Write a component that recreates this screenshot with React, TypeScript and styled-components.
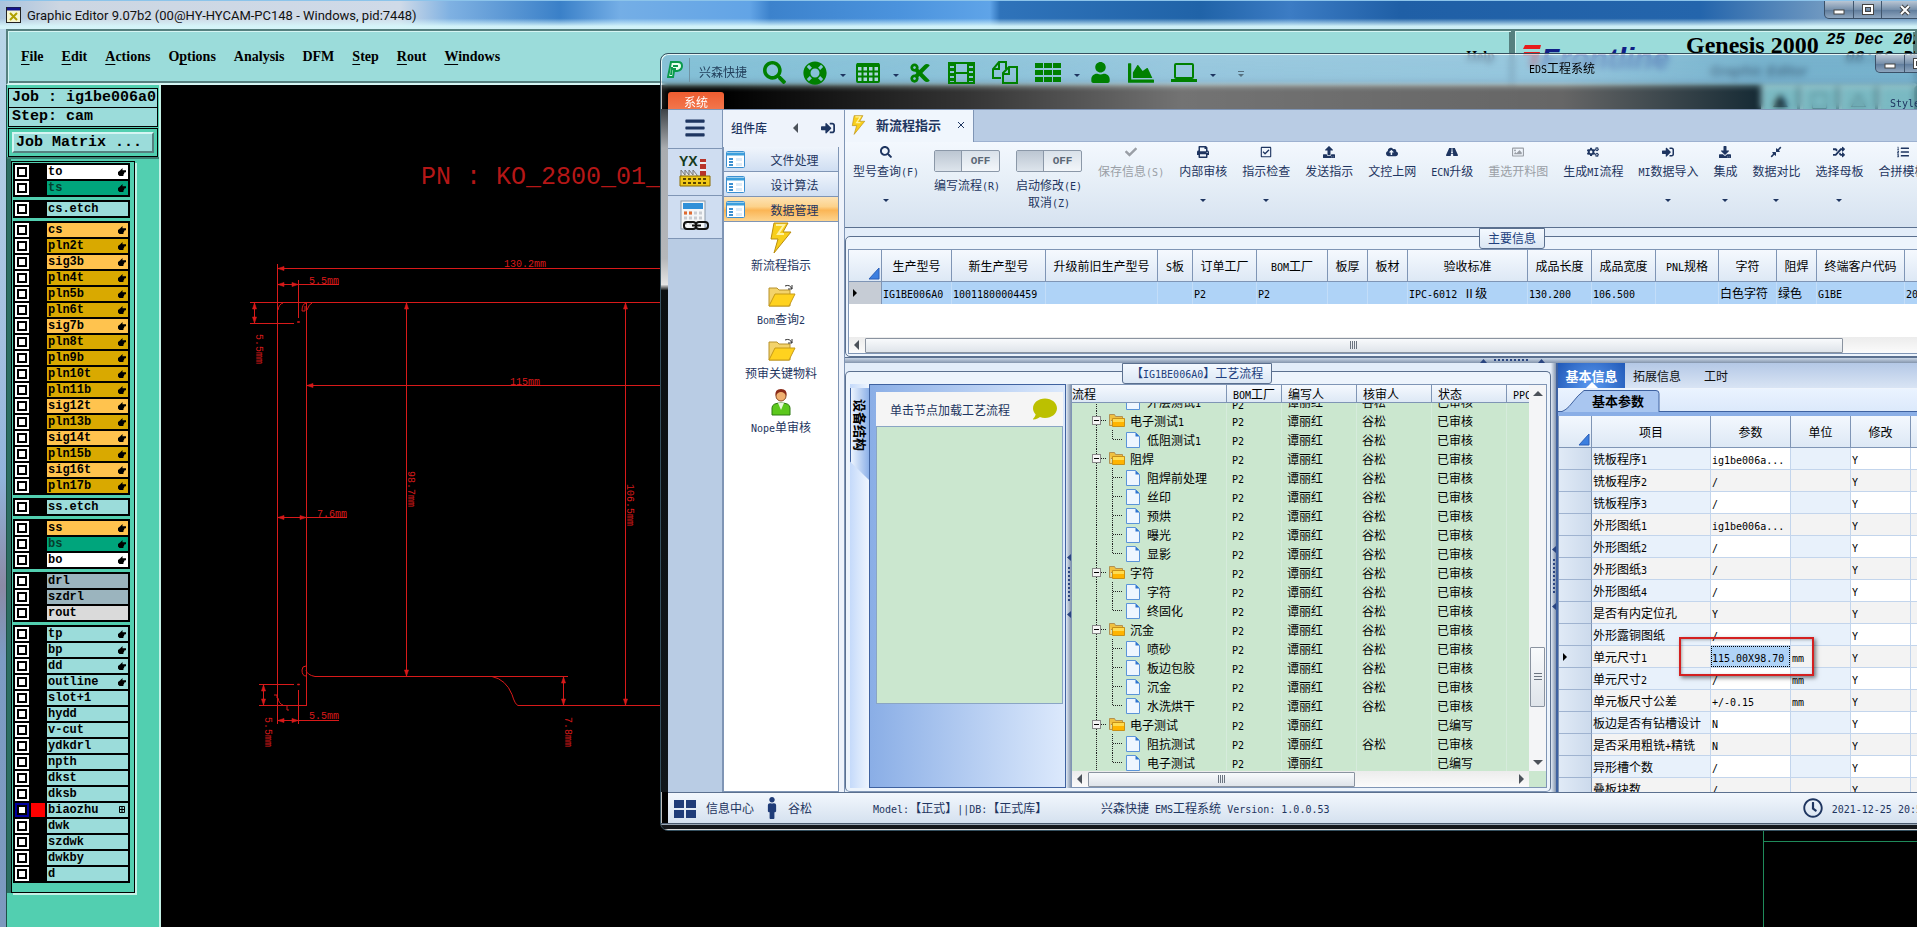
import React from 'react';
import styled, { createGlobalStyle, css } from 'styled-components';
import {
  FaSearch, FaLifeRing, FaCut, FaUser, FaChartArea, FaCheck, FaPrint, FaRegCheckSquare,
  FaUpload, FaCloudUploadAlt, FaRoad, FaRegImage, FaCogs, FaSignInAlt, FaDownload, FaCompressAlt,
  FaRandom, FaListOl, FaBars, FaMale, FaComment, FaRegClock,
} from 'react-icons/fa';

const CJK = '"Noto Sans CJK SC", sans-serif';
const LATIN = '"DejaVu Sans Mono", monospace';

const GlobalStyle = createGlobalStyle`
  * { box-sizing: border-box; }
  html, body, #root { margin: 0; height: 100%; }
  body { overflow: hidden; background: #000; font-family: ${CJK}; font-size: 12px; color: #000; }
  button { font: inherit; color: inherit; background: none; border: 0; padding: 0; margin: 0; white-space: nowrap; }
  table { border-collapse: separate; border-spacing: 0; table-layout: fixed; }
  th { font-weight: normal; }
  th, td { padding: 0; white-space: nowrap; overflow: hidden; }
  svg { display: block; flex: none; }
`;

/* Latin runs are set in a half-width face so that they line up with the ideographs. */
const Latin = styled.span`
  font-family: ${LATIN};
  font-size: 10px;
  line-height: 1;
`;
const Mix = ({ children }: { children: string }) => (
  <>
    {children.split(/([\x20-\x7e]+)/).map((part, i) =>
      i % 2 ? <Latin key={i}>{part.replace(/ /g, '\u00a0')}</Latin> : part)}
  </>
);

/* ---------- Genesis window ---------- */

const Desktop = styled.main`
  position: relative;
  height: 100%;
  min-height: 600px;
  overflow: hidden;
  display: flex;
  flex-direction: column;
`;
const GTitle = styled.header`
  height: 29px;
  flex: none;
  display: flex;
  align-items: center;
  padding-left: 6px;
  gap: 6px;
  border-top: 1px solid #8cc4ea;
  font: 13px Roboto, sans-serif;
  color: #111;
  background:
    linear-gradient(180deg, rgba(220, 245, 250, 0) 62%, rgba(214, 246, 250, 0.95) 90%),
    linear-gradient(90deg, #a9c3dd 0, #ccd6e2 60px, #cfdae8 400px, #7fb1e2 450px, #3a80c8 560px, #74aee6 620px,
      #62a4e6 750px, #3c82cc 770px, #4b93dd 900px, #5fa4e8 990px, #2f73ba 1000px, #2063a8 1200px, #3c7cc4 1290px,
      #1f5fa6 1400px, #2465ac 1700px, #6d97c0 1820px);
`;
const CaptionButtons = styled.div`
  margin: 0 -11px 0 auto;
  align-self: flex-start;
  display: flex;
  height: 18px;
  border: 1px solid #3a5068;
  border-top: 0;
  border-radius: 0 0 5px 5px;
  background: linear-gradient(#b9c6d4, #7790ab 50%, #5e7b9b 52%, #8ea6bf);
  button { width: 28px; display: flex; align-items: center; justify-content: center; border-left: 1px solid #40566e; }
  button:first-child { border-left: 0; }
  button:last-child { width: 46px; }
`;
const Caption = () => (
  <CaptionButtons>
    <button aria-label="minimize"><svg width="12" height="12"><rect x="1" y="6" width="10" height="4" fill="#fff" stroke="#444" /></svg></button>
    <button aria-label="maximize"><svg width="12" height="12"><rect x="2" y="2" width="8" height="7" fill="none" stroke="#444" strokeWidth="4" /><rect x="2" y="2" width="8" height="7" fill="none" stroke="#fff" strokeWidth="2" /></svg></button>
    <button aria-label="close"><svg width="12" height="12"><path d="M2 2l8 8M10 2l-8 8" stroke="#444" strokeWidth="4" /><path d="M2 2l8 8M10 2l-8 8" stroke="#fff" strokeWidth="2" /></svg></button>
  </CaptionButtons>
);
const GFrame = styled.div`
  flex: 1;
  min-height: 0;
  display: flex;
  flex-direction: column;
  padding-left: 6px;
  background: linear-gradient(180deg, #b9d6e8 0, #a4c0e0 35%, #92b4dc 50%, #8b8ba6 62%, #7d9cc4 70%, #7c99be 100%);
`;
const GTop = styled.div`
  display: flex;
  flex: none;
  height: 56px;
`;
const bevel = css`
  background: #9bdcda;
  border: 2px solid #56807f;
  border-bottom-color: #d5f5f3;
  box-shadow: inset 1px 1px 0 #d5f5f3, inset -2px -2px 0 #56807f;
`;
const MenuBar = styled.nav`
  ${bevel}
  width: 1507px;
  flex: none;
  display: flex;
  align-items: center;
  padding: 0 16px 0 13px;
  gap: 18px;
  font: bold 14px "Liberation Serif", serif;
`;
const MenuItem = styled.button<{ $end?: boolean }>`
  margin-left: ${p => (p.$end ? 'auto' : '0')};
  u { text-underline-offset: 3px; }
`;
const Brand = styled.div`
  ${bevel}
  flex: 1;
  min-width: 0;
  overflow: hidden;
  display: flex;
  padding: 0 0 0 6px;
`;
const Logo = styled.div`
  display: flex;
  width: 165px;
  flex: none;
  padding-top: 12px;
  font: italic bold 30px/32px "Liberation Sans", sans-serif;
  color: #101f86;
`;
const Stack = styled.div`
  width: 140px;
  flex: none;
  display: flex;
  flex-direction: column;
  white-space: nowrap;
`;
const Product = styled.div`
  font: bold 24px/28px "Liberation Serif", serif;
`;
const Sub = styled.div`
  padding-left: 24px;
  font: italic bold 14px/24px "Liberation Sans", sans-serif;
`;
const Stamp = styled.div`
  font: italic bold 16px/18px "Liberation Mono", monospace;
  white-space: nowrap;
`;
const Work = styled.div`
  flex: 1;
  min-height: 0;
  display: flex;
`;
const Side = styled.aside`
  width: 155px;
  flex: none;
  display: flex;
  flex-direction: column;
  background: #52cfb0;
  border-left: 1px solid #1f4f46;
  border-right: 2px solid #c4f1e6;
  padding-top: 3px;
`;
const Readouts = styled.div`
  padding: 0 1px;
  font: bold 15px/18px "Liberation Mono", monospace;
`;
const Readout = styled.div`
  height: 20px;
  padding: 0 3px;
  border: 1px solid #000;
  background: #9bdcda;
  white-space: nowrap;
  & + & { margin-top: -1px; }
`;
const MatrixWrap = styled.div`
  margin-top: 1px;
  padding: 3px;
  border: 1px solid #000;
`;
const MatrixButton = styled.button`
  display: block;
  width: 100%;
  height: 21px;
  padding-left: 2px;
  text-align: left;
  background: #9bdcda;
  border: 2px solid #d5f5f3;
  border-right-color: #56807f;
  border-bottom-color: #56807f;
`;
const LayerWell = styled.div`
  padding: 2px 0 0 4px;
  border-top: 2px solid #3c7f72;
  background: linear-gradient(90deg, #2d6e62 4px, transparent 4px);
`;
const LayerList = styled.div`
  width: 124px;
  padding: 1px 4px 9px 1px;
  border: 1px solid #000;
  box-shadow: 2px 2px 0 #c4f1e6;
  display: flex;
  flex-direction: column;
  gap: 3px;
`;
const LayerGroup = styled.div`
  display: flex;
  flex-direction: column;
  gap: 2px;
  padding: 2px;
  background: #000;
`;
const LayerRow = styled.label`
  display: flex;
  height: 14px;
  gap: 2px;
  font: bold 12px/14px "Liberation Mono", monospace;
`;
const LayerCheck = styled.input<{ $on?: boolean }>`
  appearance: none;
  width: 14px;
  height: 14px;
  margin: 0;
  border: 2px solid ${p => (p.$on ? '#0000a0' : '#fff')};
  background: #fff;
  box-shadow: inset 0 0 0 2px #000;
`;
const Swatch = styled.span<{ $c?: string }>`
  width: 14px;
  background: ${p => p.$c || '#000'};
`;
const LayerName = styled.span<{ $c: string; $dim?: boolean }>`
  flex: 1;
  display: flex;
  align-items: center;
  justify-content: space-between;
  padding: 0 2px 0 1px;
  background: ${p => p.$c};
  color: ${p => (p.$dim ? '#063d2c' : '#000')};
`;
const Hand = () => (
  <svg width="8" height="8" viewBox="0 0 8 8"><path d="M0 4L2 2.500 4.500 0v2.300H8v1.900H6.500v1H6v1H5.400V8H1.500L0 6.500z" fill="#000" /></svg>
);
const Grid4 = () => (
  <svg width="7" height="8" viewBox="0 0 7 8"><path d="M.5.5h5v6h-5zM3 .5v6M.5 3.5h5" fill="none" stroke="#000" /></svg>
);

const Y = '#ffc34e', D = '#d9a900', A = '#9bdcda', W = '#fff', G = '#00a57c', S = '#9bb4be';
type Layer = [string, string, number];
const LAYERS: Layer[][] = [
  [['to', W, 1], ['ts', G, 1]],
  [['cs.etch', A, 0]],
  [['cs', Y, 1], ['pln2t', D, 1], ['sig3b', Y, 1], ['pln4t', D, 1], ['pln5b', D, 1], ['pln6t', D, 1], ['sig7b', Y, 1],
    ['pln8t', D, 1], ['pln9b', D, 1], ['pln10t', D, 1], ['pln11b', D, 1], ['sig12t', Y, 1], ['pln13b', D, 1],
    ['sig14t', Y, 1], ['pln15b', D, 1], ['sig16t', Y, 1], ['pln17b', D, 1]],
  [['ss.etch', A, 0]],
  [['ss', Y, 1], ['bs', G, 1], ['bo', W, 1]],
  [['drl', S, 0], ['szdrl', S, 0], ['rout', '#dadada', 0]],
  [['tp', A, 1], ['bp', A, 1], ['dd', A, 1], ['outline', A, 1], ['slot+1', A, 0], ['hydd', A, 0], ['v-cut', A, 0],
    ['ydkdrl', A, 0], ['npth', A, 0], ['dkst', A, 0], ['dksb', A, 0], ['biaozhu', A, 2], ['dwk', A, 0],
    ['szdwk', A, 0], ['dwkby', A, 0], ['d', A, 0]],
];

const Canvas = styled.div`
  position: relative;
  flex: 1;
  min-width: 0;
  background: #000;
  overflow: hidden;
`;
const ViewTools = styled.div`
  position: absolute;
  top: 0;
  right: 0;
  display: flex;
  button {
    width: 39px; height: 30px; background: #9bdcda; border: 3px solid #c5ebe9;
    border-right-color: #56807f; border-bottom-color: #56807f; font-size: 16px;
  }
`;
const h = (x1: number, x2: number, y: number) => `M${x1} ${y}H${x2}`;
const v = (x: number, y1: number, y2: number) => `M${x} ${y1}V${y2}`;
const aL = (x: number, y: number) => `M${x} ${y}l6 -2v4z`;
const aR = (x: number, y: number) => `M${x} ${y}l-6 -2v4z`;
const aU = (x: number, y: number) => `M${x} ${y}l-2 6h4z`;
const aD = (x: number, y: number) => `M${x} ${y}l-2 -6h4z`;
const DIMS: [string, number, number, boolean][] = [
  ['130.2mm', 504, 267, false], ['5.5mm', 309, 284, false], ['115mm', 510, 385, false], ['7.6mm', 317, 517, false],
  ['5.5mm', 309, 719, false], ['5.5mm', 256, 334, true], ['98.7mm', 408, 471, true], ['106.5mm', 627, 484, true],
  ['5.5mm', 265, 717, true], ['7.8mm', 565, 717, true],
];
const Drawing = () => (
  <svg width="100%" height="100%">
    <g transform="translate(-161 -85)" stroke="#d81a1a" fill="none" strokeWidth="1" fontFamily='"Liberation Mono", monospace'>
      <path d={[
        h(277, 700, 268.5), h(277, 339, 284.5), h(250, 700, 302.5), h(250, 294, 323.5), h(307, 700, 385.5),
        h(277, 347, 517.5), h(315, 568, 676.5), h(259, 294, 684.5), h(259, 307, 705.5), h(518, 700, 705.5),
        h(277, 339, 720.5), v(277.5, 264, 724), v(298.5, 280, 318), v(254.5, 303, 323), v(306.5, 302, 705),
        v(406.5, 303, 676), v(625.5, 303, 705), v(563.5, 676, 705), v(263.5, 684, 705), v(298.5, 690, 724),
      ].join('')} />
      <path d="M278 310q1-6 5-7M307 310q2-6 5-7M306 303q-4 1-4 8h3v-5M306 666q-4 0-4 4q0 6 4 6M306 670q1 5 9 6.500M492 676.500q14 3 20 18q3 10 6 11M278 698q1 6 5 7M274 695h3v3M287 706v4h2" />
      <path fill="#d81a1a" d={[
        aL(278, 268.5), aL(278, 284.5), aR(298, 284.5), aL(307, 385.5), aL(278, 517.5), aR(306, 517.5), aL(278, 720.5),
        aR(298, 720.5), aU(254.5, 303), aD(254.5, 323), aU(406.5, 303), aD(406.5, 676), aU(625.5, 303), aD(625.5, 705),
        aU(563.5, 677), aD(563.5, 705), aU(263.5, 685), aD(263.5, 705), 'M297.500 321.500h2v1h-2zM297.500 684h2v1h-2z',
      ].join('')} strokeWidth=".6" />
      <g stroke="none" fill="#d81a1a" fontSize="10">
        {DIMS.map(([t, x, y, r], i) => <text key={i} transform={`translate(${x} ${y})${r ? ' rotate(90)' : ''}`}>{t}</text>)}
        <text x="421" y="184" fontSize="25" fill="#b51717" xmlSpace="preserve">PN : KO_2800_01_</text>
      </g>
      <path d="M1763.500 831V940M1763 841.500H2400" stroke="#1f8a5a" />
    </g>
  </svg>
);

/* ---------- EMS window ---------- */

const line = '#7f95b5';
const navy = '#1e3560';

const Ems = styled.section`
  position: absolute;
  left: 660px;
  right: -24px;
  top: 53px;
  bottom: 96px;
  display: flex;
  flex-direction: column;
  border: 1px solid #35505f;
  border-radius: 8px 0 0 8px;
  overflow: hidden;
  color: ${navy};
  box-shadow: inset 1px 1px 0 rgba(255, 255, 255, 0.75);
`;
const Glass = styled.div`
  flex: none;
  height: 54px;
  display: flex;
  flex-direction: column;
  justify-content: space-between;
  margin: 1px 0 0 1px;
  border-radius: 7px 0 0 0;
  backdrop-filter: blur(3px);
  background:
    linear-gradient(180deg, rgba(116, 172, 212, 0.55) 0, rgba(116, 172, 212, 0.6) 26px, transparent 31px),
    linear-gradient(90deg, transparent 60px, rgba(255, 255, 255, 0.2) 300px, rgba(255, 255, 255, 0.45) 520px,
      rgba(255, 255, 255, 0.4) 900px, rgba(60, 120, 150, 0.35) 1100px);
`;
const EmsTitle = styled.div`
  position: relative;
  display: flex;
  align-items: center;
  height: 30px;
  padding: 0 0 0 5px;
  color: #008000;
`;
const AppName = styled.span`
  width: 62px;
  padding: 6px 0 0 9px;
  margin-left: 6px;
  border-left: 1px solid #6f93a4;
  color: #23405c;
  line-height: 16px;
  height: 24px;
  white-space: nowrap;
`;
const Quick = styled.div`
  display: flex;
  align-items: center;
  padding: 5px 0 0 12px;
  button { margin-right: 17px; }
`;
const Drop = styled.i<{ $c?: string }>`
  display: block;
  width: 0;
  height: 0;
  border: 3px solid transparent;
  border-bottom: 0;
  border-top-color: ${p => p.$c || navy};
`;
const QuickDrop = styled(Drop)`
  margin: 6px 10px 0 -4px;
`;
const Overflow = styled.span`
  display: flex;
  flex-direction: column;
  gap: 2px;
  margin: 2px 0 0 12px;
  &::before { content: ''; height: 1px; background: #56707f; }
`;
const WindowName = styled.span`
  position: absolute;
  left: 867px;
  top: 4px;
  line-height: 18px;
  color: #000;
  white-space: nowrap;
`;
const EmsCaption = styled.div`
  position: absolute;
  right: -28px;
  top: 0;
`;
const TabRow = styled.div`
  display: flex;
  justify-content: space-between;
  align-items: flex-end;
  height: 18px;
  padding: 0 20px 0 6px;
`;
const SystemTab = styled.button`
  width: 56px;
  height: 17px;
  border-radius: 3px 3px 0 0;
  background: linear-gradient(#ee5c30, #f2764c);
  color: #fff;
  line-height: 19px;
`;
const StyleTag = styled.span`
  line-height: 12px;
`;
const EmsBody = styled.div`
  flex: 1;
  min-height: 0;
  display: flex;
  border-left: 7px solid #14181c;
  border-image: linear-gradient(180deg, #3a3f44 0, #a9acb0 40px, #b5b7ba 150px, #e4e4e4 176px, #0a0e10 182px, #10161a) 1;
  background: #e3edf9;
`;
const Rail = styled.nav`
  width: 55px;
  flex: none;
  background: #b9cce4;
  border-top: 1px solid ${line};
  border-right: 1px solid ${line};
`;
const RailButton = styled.button<{ $h: number }>`
  display: flex;
  align-items: center;
  justify-content: center;
  width: 100%;
  height: ${p => p.$h}px;
  padding-bottom: 3px;
  background: #cfddf1;
  border-bottom: 1px solid ${line};
`;
const Library = styled.aside`
  width: 121px;
  flex: none;
  display: flex;
  flex-direction: column;
  padding-right: 5px;
  background: #eef3fb;
  border-top: 1px solid ${line};
`;
const LibHead = styled.div`
  display: flex;
  align-items: center;
  height: 37px;
  padding: 0 4px 2px 8px;
  font-weight: 500;
`;
const LibTools = styled.span`
  display: flex;
  align-items: center;
  gap: 20px;
  margin-left: auto;
`;
const LibRow = styled.button<{ $on?: boolean }>`
  display: flex;
  align-items: center;
  width: 100%;
  height: 25px;
  padding-left: 2px;
  border: 1px solid ${line};
  border-top: 0;
  background: ${p => (p.$on ? 'linear-gradient(#fde3b5, #fcd28b 40%, #fbb555 55%, #fdd48e)' : 'linear-gradient(#f0f5fc, #cfdef2)')};
  span { flex: 1; padding-left: 6px; text-align: center; }
`;
const LibItems = styled.div`
  flex: 1;
  display: flex;
  flex-direction: column;
  background: #fff;
  border: 1px solid ${line};
  border-top: 0;
`;
const LibItem = styled.button`
  display: flex;
  flex-direction: column;
  align-items: center;
  justify-content: flex-end;
  height: 54px;
  line-height: 22px;
`;
const Main = styled.div`
  flex: 1;
  min-width: 0;
  display: flex;
  flex-direction: column;
  border-left: 1px solid ${line};
  border-top: 1px solid ${line};
`;
const DocTabs = styled.div`
  flex: none;
  height: 32px;
  background: #b9cce4;
  border-bottom: 1px solid #9db1d0;
`;
const DocTab = styled.button`
  display: flex;
  align-items: center;
  width: 129px;
  height: 32px;
  padding: 0 8px 3px 6px;
  gap: 10px;
  background: #f0f6fd;
  border-right: 1px solid ${line};
  font-size: 13px;
  font-weight: bold;
  span { flex: 1; text-align: left; }
`;
const Toolbar = styled.div`
  flex: none;
  display: flex;
  height: 86px;
  padding-top: 4px;
  background: linear-gradient(#f3f8fe, #e8f0f8 40%, #d6e2f0);
  border-bottom: 1px solid #5b708f;
`;
const Tool = styled.button<{ $off?: boolean }>`
  display: flex;
  flex-direction: column;
  align-items: center;
  flex: none;
  height: 64px;
  padding: 0 7px 0 8px;
  color: ${p => (p.$off ? '#9a9fa6' : navy)};
  svg { margin: 0 0 4px; }
  span { line-height: 18px; }
  i { margin-top: 19px; }
`;
const ToolLabel = styled.span`
  display: block;
  height: 18px;
`;
const SwitchTool = styled.label`
  display: flex;
  flex-direction: column;
  align-items: center;
  flex: none;
  width: 82px;
  padding-top: 4px;
  line-height: 17px;
  white-space: nowrap;
`;
const SwitchBox = styled.span`
  display: flex;
  width: 66px;
  height: 22px;
  margin-bottom: 4px;
  border: 1px solid #8b98a8;
  border-radius: 2px;
  background: linear-gradient(#d9e1e9, #f2f6fa);
  input {
    appearance: none; margin: 0; width: 27px; height: 20px; border-right: 1px solid #8b98a8;
    background: linear-gradient(#bcc6d2, #dde4ec);
  }
  b { flex: 1; text-align: center; font: bold 11px/20px "Liberation Mono", monospace; color: #5c6876; }
`;
const GroupBox = styled.section`
  position: relative;
  margin: 8px 0 0;
  border: 1px solid #5b708f;
  border-radius: 5px;
  padding: 12px 2px 2px;
  background: #edf4fc;
`;
const Legend = styled.h2<{ $x: number }>`
  position: absolute;
  left: ${p => p.$x}px;
  top: -9px;
  margin: 0;
  padding: 0 8px;
  height: 21px;
  font-size: 12px;
  font-weight: normal;
  line-height: 17px;
  white-space: nowrap;
  border: 1px solid #5b708f;
  border-radius: 0 0 3px 3px;
  background: linear-gradient(#f4f9ff, #dbe7f4);
  color: #213f7d;
`;
const GridBox = styled.div`
  border: 1px solid ${line};
  background: #fff;
  overflow: hidden;
`;
const InfoTable = styled.table`
  width: 1080px;
  margin-bottom: 33px;
  color: #000;
  th {
    height: 32px; text-align: center; background: linear-gradient(#f5f9fe, #dde8f5);
    border-right: 1px solid ${line}; border-bottom: 1px solid ${line};
  }
  td { height: 22px; line-height: 22px; padding-left: 1px; background: #afd3f7; border-right: 1px solid #c3ddf8; text-align: left; }
  td:first-child { background: #c6ccd5; border-right-color: ${line}; }
`;
const Corner = () => (
  <svg width="32" height="31"><path d="M30 18v11H20z" fill="#3c7fe0" stroke="#2a5fb8" /></svg>
);
const Pointer = () => <svg width="10" height="10"><path d="M3 1l4 4-4 4z" fill="#000" /></svg>;
const HBar = styled.div`
  display: flex;
  align-items: center;
  height: 16px;
  background: linear-gradient(#ececec, #fbfbfb);
`;
const ArrowButton = styled.button`
  width: 16px;
  height: 16px;
  flex: none;
  display: flex;
  align-items: center;
  justify-content: center;
`;
const Thumb = styled.div<{ $w?: string; $v?: boolean }>`
  display: flex;
  align-items: center;
  justify-content: center;
  ${p => (p.$v ? 'width: 15px; height: 60px;' : `width: ${p.$w}; height: 15px;`)}
  border: 1px solid #8a93a0;
  border-radius: 1px;
  background: linear-gradient(#f8fafc, #dfe4ea);
`;
const Grip = ({ v: vertical }: { v?: boolean }) => (
  <svg width="8" height="8"><path d={vertical ? 'M0 .5h8M0 3.500h8M0 6.500h8' : 'M.5 0v8M2.500 0v8M4.500 0v8M6.500 0v8'} stroke="#6b7480" /></svg>
);
const Arrow = ({ d }: { d: 'l' | 'r' | 'u' | 'd' }) => {
  const p = { l: 'M7 0v10L2 5z', r: 'M3 0v10l5-5z', u: 'M0 8h10L5 3z', d: 'M0 2h10L5 7z' }[d];
  return <svg width="10" height="10"><path d={p} fill="#4c525a" /></svg>;
};
const RowSplitter = styled.div`
  flex: none;
  display: flex;
  justify-content: center;
  height: 6px;
  padding-left: 240px;
  border-top: 1px solid #5b708f;
  background: linear-gradient(#c9d6e6, #8495ad);
`;
const ColSplitter = styled.div`
  width: 5px;
  flex: none;
  display: flex;
  align-items: center;
  background: linear-gradient(90deg, #e1eaf5, #8495ad);
`;
const Dots = ({ vertical }: { vertical?: boolean }) => vertical ? (
  <svg width="5" height="64">
    <path d="M5 0v7L1 3.500zM5 57v7L1 60.500z" fill="#2a4580" />
    <path d="M3 13v36" stroke="#2a4580" strokeWidth="2" strokeDasharray="2 2" />
  </svg>
) : (
  <svg width="66" height="6">
    <path d="M0 5h7L3.500 1zM58 5h7L61.500 1z" fill="#2a4580" />
    <path d="M14 2h36" stroke="#2a4580" strokeWidth="2" strokeDasharray="2 2" />
  </svg>
);
const Lower = styled.div`
  flex: 1;
  min-height: 0;
  display: flex;
`;
const FlowPane = styled(GroupBox)`
  width: 706px;
  flex: none;
  display: flex;
  border-bottom-color: ${line};
  padding: 12px 3px 3px 4px;
`;
const DevTabs = styled.div`
  width: 19px;
  flex: none;
  padding-top: 4px;
  background: linear-gradient(90deg, #c5dafa, #eef5fe);
`;
const DevTab = styled.button`
  width: 19px;
  height: 92px;
  padding: 10px 0 28px;
  writing-mode: vertical-rl;
  text-orientation: sideways;
  background: linear-gradient(90deg, #eef5fe, #8cb0e8);
  border-left: 1px solid #3f62a0;
  clip-path: polygon(0 0, 100% 0, 100% 100%, 0 80%);
  font-size: 13px;
  line-height: 18px;
  font-weight: bold;
  color: #000;
`;
const DevPanel = styled.div`
  width: 197px;
  flex: none;
  padding: 7px 2px 0 6px;
  border: 1px solid #3f62a0;
  background: linear-gradient(90deg, #8aaee6, #dce9fc);
`;
const DevHead = styled.div`
  display: flex;
  align-items: center;
  justify-content: space-between;
  height: 34px;
  padding: 0 6px 0 14px;
  background: #f5f5f5;
  color: ${navy};
`;
const DevBox = styled.div`
  height: 278px;
  border: 1px solid #8aa5c4;
  background: #cbe7cf;
`;
const TreePane = styled.div`
  flex: 1;
  min-width: 0;
  display: flex;
  flex-direction: column;
  border: 1px solid ${line};
  background: #cbe7cf;
`;
const TreeTop = styled.div`
  flex: 1;
  min-height: 0;
  display: flex;
`;
const TreeView = styled.div`
  flex: 1;
  min-width: 0;
  overflow: hidden;
`;
const TreeTable = styled.table`
  width: 530px;
  color: #000;
  thead th {
    height: 18px; line-height: 16px; padding-left: 6px; text-align: left;
    background: linear-gradient(#f5f9fe, #dde8f5); border-right: 1px solid ${line}; border-bottom: 1px solid ${line};
  }
  thead th:first-child { padding-left: 0; }
  td { height: 19px; line-height: 18px; padding-left: 5px; border-right: 1px solid #d6ebdc; }
  td:first-child { padding-left: 0; }
`;
const ScrolledRow = styled.tr`
  /* Scrolled more than half under the header: only the lower part of the line shows. */
  && td { height: 8px; }
`;
const Cut = styled.div`
  display: flex;
  align-items: flex-end;
  height: 8px;
  overflow: hidden;
`;
const Node = styled.div`
  display: flex;
  align-items: center;
  height: 19px;
  gap: 5px;
`;
const TreeBar = styled.div`
  width: 17px;
  flex: none;
  display: flex;
  flex-direction: column;
  align-items: center;
  background: #f4f5f7;
  > :nth-child(2) { margin-top: auto; margin-bottom: 48px; }
`;
const TreeFoot = styled(HBar)`
  flex: none;
  margin-right: 17px;
  > :last-child { margin-left: auto; }
`;

const Folder = ({ x, y }: { x: number; y: number }) => (
  <g transform={`translate(${x} ${y})`}>
    <path d="M.5.5h5l1 2h7v4h-13z" fill="#f0c040" stroke="#b39150" />
    <path d="M.5 1v10.500H3" fill="#f7d070" stroke="#b39150" />
    <path d="M3.500 4.500h12v8h-12z" fill="#ffb400" stroke="#c79018" />
    <path d="M4 5h11v3H4z" fill="#ffdc50" />
  </g>
);
const Doc = ({ x, y }: { x: number; y: number }) => (
  <g transform={`translate(${x} ${y})`}>
    <path d="M.5.5h9l4 4v11H.5z" fill="#eef6ff" stroke="#5a94d8" />
    <path d="M9.500.5v4h4z" fill="#2f74d0" />
  </g>
);
const dash = { stroke: '#222', strokeDasharray: '1 1', fill: 'none' };
const TreeGlyph = ({ kind, last }: { kind: 'f' | 'c'; last?: boolean }) => kind === 'f' ? (
  <svg width="53" height="19">
    <path d="M24.500 0V19M29 9.500H35" {...dash} />
    <rect x="20.500" y="5.500" width="8" height="8" fill="#f4f4f4" stroke="#888" />
    <path d="M22 9.500h5" stroke="#000" />
    <Folder x={37} y={3} />
  </svg>
) : (
  <svg width="70" height="19">
    <path d={`M24.500 0V19M40.500 0V${last ? 10 : 19}M41 9.500H51`} {...dash} />
    <Doc x={54} y={2} />
  </svg>
);
type Flow = ['f' | 'c', string, string, string, boolean?];
const OK = '已审核', WR = '已编写', GU = '谷松';
const FLOWS: Flow[] = [
  ['f', '电子测试1', GU, OK], ['c', '低阻测试1', GU, OK, true], ['f', '阻焊', GU, OK],
  ['c', '阻焊前处理', GU, OK], ['c', '丝印', GU, OK], ['c', '预烘', GU, OK], ['c', '曝光', GU, OK], ['c', '显影', GU, OK, true],
  ['f', '字符', GU, OK], ['c', '字符', GU, OK], ['c', '终固化', GU, OK, true], ['f', '沉金', GU, OK], ['c', '喷砂', GU, OK],
  ['c', '板边包胶', GU, OK], ['c', '沉金', GU, OK], ['c', '水洗烘干', GU, OK, true], ['f', '电子测试', '', WR],
  ['c', '阻抗测试', GU, OK], ['c', '电子测试', '', WR, true],
];

const ParamPane = styled.section`
  flex: 1;
  min-width: 0;
  display: flex;
  flex-direction: column;
  border-left: 2px solid #3f62a0;
  background: #8aaee6;
`;
const InfoTabs = styled.div`
  flex: none;
  display: flex;
  height: 26px;
  background: linear-gradient(#b4c8e6, #d9e4f4);
  border-bottom: 1px solid #eef4fc;
  button { padding: 0 15px 0 8px; line-height: 22px; color: #111; }
`;
const BlueTab = styled.button`
  position: relative;
  width: 67px;
  font-size: 13px;
  font-weight: bold;
  background: radial-gradient(circle at 50% 90%, #5b9af0, #2159b8);
  &&& { color: #fff; padding: 0; }
  &::after {
    content: ''; position: absolute; left: 28px; bottom: 0; border: 6px solid transparent;
    border-top: 0; border-bottom-color: #fff;
  }
`;
const SubTabs = styled.div`
  flex: none;
  height: 23px;
  background: linear-gradient(#eaf3ff, #dce9fb);
  border-bottom: 1px solid #3f62a0;
`;
const SubTab = styled.button`
  position: relative;
  width: 100px;
  height: 23px;
  padding-left: 20px;
  font-size: 13px;
  font-weight: bold;
  line-height: 22px;
  color: #000;
  svg { position: absolute; left: 0; top: 0; }
  span { position: relative; }
`;
const ParamBox = styled.div`
  flex: 1;
  min-height: 0;
  overflow: hidden;
  margin-top: 4px;
  background: #fff;
`;
const ParamTable = styled.table`
  width: 420px;
  color: #000;
  border-left: 1px solid ${line};
  th { height: 32px; text-align: center; background: linear-gradient(#f3f8fe, #dde8f5);
    border-right: 1px solid ${line}; border-bottom: 1px solid ${line}; }
  td { height: 22px; line-height: 21px; padding-left: 1px; border-right: 1px solid #c3d5ec; border-bottom: 1px solid #c3d5ec; }
  tbody tr:nth-child(even) td { background: #f3f3f3; }
  tbody tr:nth-child(odd) td:nth-child(2), tbody tr:nth-child(odd) td:nth-child(4) { background: #e8f1fb; }
  tbody tr td:first-child { background: linear-gradient(90deg, #e0eaf6, #ccdaec); border-right-color: ${line}; border-bottom-color: #9fb3d0; }
`;
const Picked = styled.div`
  height: 21px;
  line-height: 19px;
  margin-left: -1px;
  border: 1px dotted #000;
  background: #afd3f7;
`;
const Highlight = styled.div`
  position: absolute;
  left: 1018px;
  top: 583px;
  width: 135px;
  height: 39px;
  border: 2px solid #d42020;
  box-shadow: 2px 2px 4px rgba(0, 0, 0, 0.5), inset 1px 1px 3px rgba(0, 0, 0, 0.3);
`;
const PARAMS: [string, string, string][] = [
  ['铣板程序1', 'ig1be006a...', ''], ['铣板程序2', '/', ''], ['铣板程序3', '/', ''], ['外形图纸1', 'ig1be006a...', ''],
  ['外形图纸2', '/', ''], ['外形图纸3', '/', ''], ['外形图纸4', '/', ''], ['是否有内定位孔', 'Y', ''], ['外形露铜图纸', '/', ''],
  ['单元尺寸1', '115.00X98.70', 'mm'], ['单元尺寸2', '/', 'mm'], ['单元板尺寸公差', '+/-0.15', 'mm'],
  ['板边是否有钻槽设计', 'N', ''], ['是否采用粗铣+精铣', 'N', ''], ['异形槽个数', '/', ''], ['叠板块数', '/', ''],
];

const StatusBar = styled.footer`
  flex: none;
  display: flex;
  align-items: center;
  height: 31px;
  margin-left: 7px;
  padding: 0 12px 0 6px;
  border-top: 1px solid #5b708f;
  background: linear-gradient(#f2f7fd, #d5e1ef);
  white-space: nowrap;
  color: ${navy};
`;
const StatusItem = styled.span<{ $w?: number }>`
  display: flex;
  align-items: center;
  gap: 9px;
  line-height: 20px;
  ${p => (p.$w ? `width: ${p.$w}px;` : 'margin-left: auto;')}
`;
const FrameEdge = styled.div`
  flex: none;
  height: 7px;
  border-top: 1px solid #4a5a6e;
  border-bottom: 1px solid #d8d8d8;
  background: #15181c;
  box-shadow: inset 0 1px 0 #9aa7b5;
`;

/* ---------- Icons ---------- */

const Bolt = ({ s }: { s: number }) => (
  <svg width={s * 0.75} height={s} viewBox="0 0 24 32">
    <path d="M5 1h14l-5 9h8L5 31l4-14H2z" fill="#f8cf1c" stroke="#b98d10" />
    <path d="M7 3h8l-6 9h6" fill="none" stroke="#fff2a0" strokeWidth="2" />
  </svg>
);
const OpenFolder = () => (
  <svg width="32" height="24" viewBox="0 0 32 24">
    <path d="M4 4h8l2 2h11v16H4z" fill="#f3d36b" stroke="#b8922c" />
    <path d="M10 10h20l-6 12H4z" fill="#ffd21f" stroke="#c69a18" />
    <path d="M20 2q5-2 7 3M27 1v4h-4" fill="none" stroke="#333" />
  </svg>
);
const Person = () => (
  <svg width="24" height="28" viewBox="0 0 24 28">
    <path d="M3 27v-7q0-5 9-5t9 5v7z" fill="#5cc81c" stroke="#2d7a10" />
    <path d="M9 15h6l-3 7z" fill="#e8f6dc" />
    <circle cx="12" cy="8" r="5" fill="#f0b070" stroke="#8a4a20" />
    <path d="M6.500 8q-1-7 5.500-7t5.500 7q-2-4-5.500-4t-5.500 4z" fill="#8a2a18" />
  </svg>
);
const Form = () => (
  <svg width="19" height="17">
    <rect x=".5" y=".5" width="18" height="16" rx="1" fill="#fff" stroke="#3b8fd0" />
    <path d="M1 3h17" stroke="#3b9fdc" strokeWidth="3" />
    <path d="M3 8h4M3 11h4M3 14h4" stroke="#3b8fd0" strokeWidth="2" />
    <path d="M10 7h6v3h-6zM10 12h6v3h-6z" fill="#dcebf8" />
  </svg>
);
const Factory = () => (
  <svg width="32" height="32" viewBox="0 0 32 32">
    <path d="M21 4h6v20h-6z" fill="#b8342a" />
    <path d="M21 8h6M21 15h6" stroke="#eee" strokeWidth="2" />
    <path d="M2 22V15l4 5V15l4 5V15l4 5V15l4 5v3z" fill="#e4e4e4" stroke="#777" />
    <path d="M1 21h30v10H1z" fill="#f0c818" stroke="#8a6a00" />
    <path d="M4 24h25M4 28h25" stroke="#5a4400" strokeWidth="2" strokeDasharray="3 2" />
    <text x="0" y="11" fontSize="14" fontWeight="bold" fontFamily="Liberation Sans, sans-serif" fill="#153a1c">YX</text>
  </svg>
);
const Calculator = () => (
  <svg width="30" height="32" viewBox="0 0 30 32">
    <rect x="1" y="1" width="24" height="28" fill="#f4f6f8" stroke="#8a98a8" />
    <rect x="3" y="3" width="20" height="6" fill="#3090d8" />
    <path d="M4 13h18M4 18h18M4 23h8" stroke="#c8ccd2" strokeWidth="3" strokeDasharray="3 2" />
    <path d="M4 13h8" stroke="#e06a30" strokeWidth="3" strokeDasharray="3 2" />
    <rect x="4" y="22" width="12" height="7" rx="3" fill="none" stroke="#111" strokeWidth="2" />
    <rect x="16" y="22" width="12" height="7" rx="3" fill="none" stroke="#111" strokeWidth="2" />
    <path d="M12 25.500h9" stroke="#111" strokeWidth="2" />
  </svg>
);
const green = '#008000';
const TableIcon = () => (
  <svg width="24" height="20" viewBox="0 0 24 20">
    <rect x="1" y="1" width="22" height="18" rx="1" fill="#a9d4dc" stroke={green} strokeWidth="2" />
    <path d="M1 2h22" stroke={green} strokeWidth="4" />
    <path d="M1 8.500h22M1 13.500h22M6.500 3v16M12 3v16M17.500 3v16" stroke={green} strokeWidth="2" />
  </svg>
);
const FilmIcon = () => (
  <svg width="27" height="22" viewBox="0 0 27 22">
    <path d="M1 1h25v20H1zM7 1v20M20 1v20M7 11h13" fill="none" stroke={green} strokeWidth="2" />
    <path d="M4 1v20M23 1v20" stroke={green} strokeWidth="4" strokeDasharray="3 2" />
  </svg>
);
const FilesIcon = () => (
  <svg width="26" height="23" viewBox="0 0 26 23" fill="none" stroke={green} strokeWidth="2">
    <path d="M9 17H1V8l6-7h7v7M7 1v7H1" />
    <path d="M11 12l6-6h8v16H11zM17 6v7h-6" />
  </svg>
);
const BlocksIcon = () => (
  <svg width="26" height="20" viewBox="0 0 26 20">
    <path d="M0 0h8v5H0zM9 0h8v5H9zM18 0h8v5h-8zM0 7h8v5H0zM9 7h8v5H9zM18 7h8v5h-8zM0 14h8v5H0zM9 14h8v5H9zM18 14h8v5h-8z" fill={green} />
  </svg>
);
const LaptopIcon = () => (
  <svg width="26" height="20" viewBox="0 0 26 20">
    <rect x="4" y="1" width="18" height="14" rx="1" fill="none" stroke={green} strokeWidth="2" />
    <path d="M0 17.500h26" stroke={green} strokeWidth="3" />
  </svg>
);
const AppLogo = () => (
  <svg width="16" height="18" viewBox="0 0 16 18">
    <path d="M4 1h7q4 0 4 4t-5 5H7l-1 6H1z" fill="#e8fff0" stroke="#0a9a4c" strokeWidth="2" />
    <path d="M6 5h5M5 8h4M4 14l1-8" stroke="#0a9a4c" strokeWidth="2" />
  </svg>
);
const XIcon = () => (
  <svg width="15" height="17"><rect x=".5" y=".5" width="14" height="15" fill="#f6f6d0" stroke="#222" /><path d="M1 2h13" stroke="#14148c" strokeWidth="3" /><path d="M4 6l7 7M11 6l-7 7" stroke="#b0a000" strokeWidth="2" /></svg>
);
const Tiles = () => (
  <svg width="23" height="19"><path d="M0 1h10v8H0zM12 1h10v8H12zM0 11h10v8H0zM12 11h10v8H12z" fill="#1f3c78" /></svg>
);
const Man = styled(FaMale)`
  margin: 0 -4px 0 -3px;
`;

const TOOLS: [React.ComponentType<{ size?: number }>, string, boolean, boolean][] = [
  [FaCheck, '保存信息(S)', false, true], [FaPrint, '内部审核', true, false], [FaRegCheckSquare, '指示检查', true, false],
  [FaUpload, '发送指示', false, false], [FaCloudUploadAlt, '文控上网', false, false], [FaRoad, 'ECN升级', false, false],
  [FaRegImage, '重选开料图', false, true], [FaCogs, '生成MI流程', false, false], [FaSignInAlt, 'MI数据导入', true, false],
  [FaDownload, '集成', true, false], [FaCompressAlt, '数据对比', true, false], [FaRandom, '选择母板', true, false],
  [FaListOl, '合拼模板', false, false],
];
const INFO: [string, number, string][] = [
  ['生产型号', 70, 'IG1BE006A0'], ['新生产型号', 94, '10011800004459'], ['升级前旧生产型号', 112, ''], ['S板', 35, ''],
  ['订单工厂', 64, 'P2'], ['BOM工厂', 71, 'P2'], ['板厚', 40, ''], ['板材', 40, ''], ['验收标准', 120, 'IPC-6012 Ⅱ级'],
  ['成品长度', 64, '130.200'], ['成品宽度', 64, '106.500'], ['PNL规格', 63, ''], ['字符', 58, '白色字符'], ['阻焊', 40, '绿色'],
  ['终端客户代码', 88, 'G1BE'], ['', 24, '20'],
];
const MENUS: [string, string, string][] = [
  ['', 'F', 'ile'], ['', 'E', 'dit'], ['', 'A', 'ctions'], ['O', 'p', 'tions'], ['Analysis', '', ''], ['DFM', '', ''],
  ['', 'S', 'tep'], ['', 'R', 'out'], ['', 'W', 'indows'],
];

export default function App() {
  return (
    <Desktop>
      <GlobalStyle />
      <GTitle>
        <XIcon />
        <span>Graphic Editor 9.07b2 (00@HY-HYCAM-PC148 - Windows, pid:7448)</span>
        <Caption />
      </GTitle>
      <GFrame>
        <GTop>
          <MenuBar>
            {MENUS.map(([a, b, c]) => <MenuItem key={a + b + c}>{a}<u>{b}</u>{c}</MenuItem>)}
            <MenuItem $end>Help</MenuItem>
          </MenuBar>
          <Brand>
            <Logo>
              <svg width="20" height="26" viewBox="0 0 20 26"><path d="M4 2h16l-1 4H2zM12 9h7l-4 15H8l3-11H2l1-4z" fill="#e81c1c" /></svg>
              Frontline
            </Logo>
            <Stack><Product>Genesis 2000</Product><Sub>Graphic Editor</Sub></Stack>
            <Stamp>25 Dec 2021<br />&nbsp;&nbsp;08:56 PM</Stamp>
          </Brand>
        </GTop>
        <Work>
          <Side>
            <Readouts>
              <Readout>Job : ig1be006a0</Readout>
              <Readout>Step: cam</Readout>
              <MatrixWrap><MatrixButton>Job Matrix ...</MatrixButton></MatrixWrap>
            </Readouts>
            <LayerWell>
              <LayerList>
                {LAYERS.map((group, i) => (
                  <LayerGroup key={i}>
                    {group.map(([name, color, mark]) => (
                      <LayerRow key={name}>
                        <LayerCheck type="checkbox" $on={mark === 2} />
                        <Swatch $c={mark === 2 ? '#f00' : undefined} />
                        <LayerName $c={color} $dim={color === G}>{name}{mark === 1 && <Hand />}{mark === 2 && <Grid4 />}</LayerName>
                      </LayerRow>
                    ))}
                  </LayerGroup>
                ))}
              </LayerList>
            </LayerWell>
          </Side>
          <Canvas>
            <Drawing />
            <ViewTools>
              <button>▲</button><button>▢</button><button>△</button><button aria-label="more" />
            </ViewTools>
          </Canvas>
        </Work>
      </GFrame>

      <Ems>
        <Glass>
          <EmsTitle>
            <AppLogo />
            <AppName>兴森快捷</AppName>
            <Quick>
              <button aria-label="search"><FaSearch size={23} /></button>
              <button aria-label="help"><FaLifeRing size={24} /></button>
              <QuickDrop />
              <button aria-label="table"><TableIcon /></button>
              <QuickDrop />
              <button aria-label="cut"><FaCut size={22} /></button>
              <button aria-label="film"><FilmIcon /></button>
              <button aria-label="copy"><FilesIcon /></button>
              <button aria-label="grid"><BlocksIcon /></button>
              <QuickDrop />
              <button aria-label="user"><FaUser size={21} /></button>
              <button aria-label="chart"><FaChartArea size={26} /></button>
              <button aria-label="laptop"><LaptopIcon /></button>
              <QuickDrop />
              <Overflow><Drop $c="#56707f" /></Overflow>
            </Quick>
            <WindowName><Mix>EDS工程系统</Mix></WindowName>
            <EmsCaption><Caption /></EmsCaption>
          </EmsTitle>
          <TabRow><SystemTab>系统</SystemTab><StyleTag><Mix>Style</Mix></StyleTag></TabRow>
        </Glass>
        <EmsBody>
          <Rail>
            <RailButton $h={39} aria-label="menu"><FaBars size={22} /></RailButton>
            <RailButton $h={47} aria-label="factory"><Factory /></RailButton>
            <RailButton $h={43} aria-label="calculator"><Calculator /></RailButton>
          </Rail>
          <Library>
            <LibHead>组件库<LibTools><Arrow d="l" /><FaSignInAlt size={14} /></LibTools></LibHead>
            <LibRow><Form /><span>文件处理</span></LibRow>
            <LibRow><Form /><span>设计算法</span></LibRow>
            <LibRow $on><Form /><span>数据管理</span></LibRow>
            <LibItems>
              <LibItem><Bolt s={32} />新流程指示</LibItem>
              <LibItem><OpenFolder /><div><Mix>Bom查询2</Mix></div></LibItem>
              <LibItem><OpenFolder />预审关键物料</LibItem>
              <LibItem><Person /><div><Mix>Nope单审核</Mix></div></LibItem>
            </LibItems>
          </Library>
          <Main>
            <DocTabs>
              <DocTab><Bolt s={20} /><span>新流程指示</span><svg width="8" height="8"><path d="M1 1l6 6M7 1l-6 6" stroke={navy} /></svg></DocTab>
            </DocTabs>
            <Toolbar>
              <Tool><FaSearch size={12} /><ToolLabel><Mix>型号查询(F)</Mix></ToolLabel><Drop /></Tool>
              <SwitchTool><SwitchBox><input type="checkbox" /><b>OFF</b></SwitchBox><span><Mix>编写流程(R)</Mix></span></SwitchTool>
              <SwitchTool><SwitchBox><input type="checkbox" /><b>OFF</b></SwitchBox><span><Mix>启动修改(E)</Mix></span><span><Mix>取消(Z)</Mix></span></SwitchTool>
              {TOOLS.map(([Icon, label, drop, off]) => (
                <Tool key={label} $off={off} disabled={off}><Icon size={12} /><ToolLabel><Mix>{label}</Mix></ToolLabel>{drop && <Drop />}</Tool>
              ))}
            </Toolbar>
            <GroupBox>
              <Legend $x={633}>主要信息</Legend>
              <GridBox>
                <InfoTable>
                  <colgroup><col width="33" />{INFO.map(([n, w]) => <col key={n} width={w} />)}</colgroup>
                  <thead><tr><th><Corner /></th>{INFO.map(([n]) => <th key={n}><Mix>{n}</Mix></th>)}</tr></thead>
                  <tbody><tr><td><Pointer /></td>{INFO.map(([n, , c]) => <td key={n}><Mix>{c}</Mix></td>)}</tr></tbody>
                </InfoTable>
                <HBar><ArrowButton aria-label="left"><Arrow d="l" /></ArrowButton><Thumb $w="90%"><Grip /></Thumb></HBar>
              </GridBox>
            </GroupBox>
            <RowSplitter><Dots /></RowSplitter>
            <Lower>
              <FlowPane>
                <Legend $x={276}><Mix>【IG1BE006A0】工艺流程</Mix></Legend>
                <DevTabs><DevTab>设备结构</DevTab></DevTabs>
                <DevPanel>
                  <DevHead>单击节点加载工艺流程<FaComment size={24} color="#bcc000" /></DevHead>
                  <DevBox />
                </DevPanel>
                <ColSplitter><Dots vertical /></ColSplitter>
                <TreePane>
                  <TreeTop>
                    <TreeView>
                      <TreeTable>
                        <colgroup><col width="155" /><col width="55" /><col width="75" /><col width="75" /><col width="75" /><col width="95" /></colgroup>
                        <thead><tr>{['流程', 'BOM工厂', '编写人', '核审人', '状态', 'PPC'].map(t => <th key={t}><Mix>{t}</Mix></th>)}</tr></thead>
                        <tbody>
                          <ScrolledRow>
                            <td><Cut><Node><TreeGlyph kind="c" last /><span><Mix>外层测试1</Mix></span></Node></Cut></td>
                            <td><Cut><Mix>P2</Mix></Cut></td><td><Cut>谭丽红</Cut></td><td><Cut>{GU}</Cut></td><td><Cut>{OK}</Cut></td><td />
                          </ScrolledRow>
                          {FLOWS.map(([k, name, who, st, last], i) => (
                            <tr key={i}>
                              <td><Node><TreeGlyph kind={k} last={last} /><span><Mix>{name}</Mix></span></Node></td>
                              <td><Mix>P2</Mix></td><td>谭丽红</td><td>{who}</td><td>{st}</td><td />
                            </tr>
                          ))}
                        </tbody>
                      </TreeTable>
                    </TreeView>
                    <TreeBar>
                      <ArrowButton aria-label="up"><Arrow d="u" /></ArrowButton>
                      <Thumb $v><Grip v /></Thumb>
                      <ArrowButton aria-label="down"><Arrow d="d" /></ArrowButton>
                    </TreeBar>
                  </TreeTop>
                  <TreeFoot>
                    <ArrowButton aria-label="left"><Arrow d="l" /></ArrowButton>
                    <Thumb $w="267px"><Grip /></Thumb>
                    <ArrowButton aria-label="right"><Arrow d="r" /></ArrowButton>
                  </TreeFoot>
                </TreePane>
              </FlowPane>
              <ColSplitter><Dots vertical /></ColSplitter>
              <ParamPane>
                <InfoTabs><BlueTab>基本信息</BlueTab><button>拓展信息</button><button>工时</button></InfoTabs>
                <SubTabs>
                  <SubTab>
                    <svg width="102" height="23"><path d="M2 23Q8 22 14 14T26 1.500H98q3 0 3 3V23" fill="#a9c6f0" stroke="#3f62a0" /></svg>
                    <span>基本参数</span>
                  </SubTab>
                </SubTabs>
                <ParamBox>
                  <ParamTable>
                    <colgroup><col width="33" /><col width="119" /><col width="80" /><col width="60" /><col width="60" /><col width="68" /></colgroup>
                    <thead><tr><th><Corner /></th><th>项目</th><th>参数</th><th>单位</th><th>修改</th><th /></tr></thead>
                    <tbody>
                      {PARAMS.map(([n, val, unit], i) => (
                        <tr key={n}>
                          <td>{i === 9 && <Pointer />}</td>
                          <td><Mix>{n}</Mix></td>
                          <td>{i === 9 ? <Picked><Mix>{val}</Mix></Picked> : <Mix>{val}</Mix>}</td>
                          <td><Mix>{unit}</Mix></td>
                          <td><Mix>Y</Mix></td>
                          <td />
                        </tr>
                      ))}
                    </tbody>
                  </ParamTable>
                </ParamBox>
              </ParamPane>
            </Lower>
          </Main>
        </EmsBody>
        <StatusBar>
          <StatusItem $w={90}><Tiles />信息中心</StatusItem>
          <StatusItem $w={109}><Man size={22} color="#1f3c78" />谷松</StatusItem>
          <StatusItem $w={228}><span><Mix>Model:【正式】||DB:【正式库】</Mix></span></StatusItem>
          <StatusItem $w={300}><span><Mix>兴森快捷 EMS工程系统 Version: 1.0.0.53</Mix></span></StatusItem>
          <StatusItem><FaRegClock size={20} /><span><Mix>2021-12-25 20:56</Mix></span></StatusItem>
        </StatusBar>
        <FrameEdge />
        <Highlight />
      </Ems>
    </Desktop>
  );
}
